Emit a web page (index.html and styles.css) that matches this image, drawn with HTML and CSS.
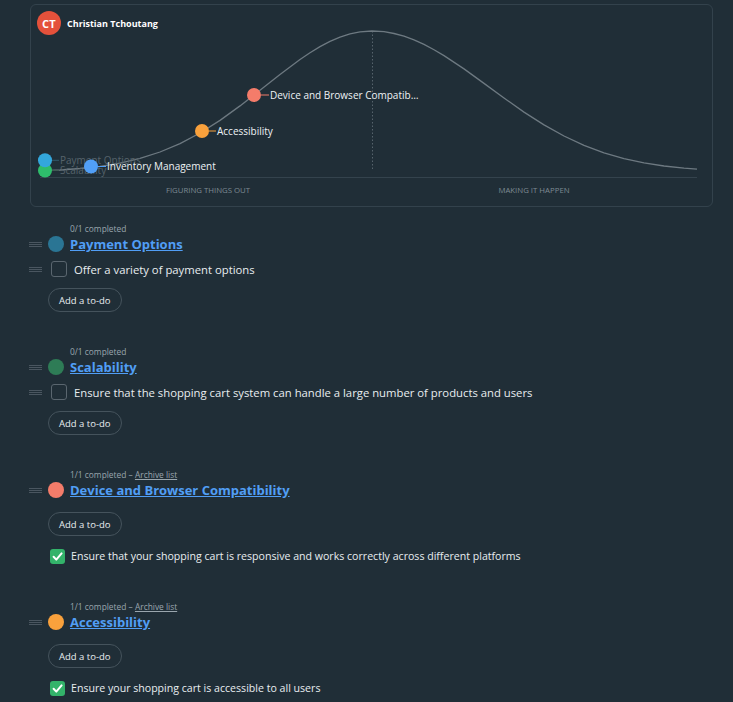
FILE: index.html
```html
<!DOCTYPE html>
<html lang="en">
<head>
<meta charset="utf-8">
<title>Hill chart</title>
<link rel="stylesheet" href="styles.css">
</head>
<body>
<div class="page">
  <section class="chart-card">
    <div class="owner">
      <span class="avatar">CT</span>
      <span class="owner-name">Christian Tchoutang</span>
    </div>
    <svg class="hill" width="681" height="201" viewBox="31 5 681 201" xmlns="http://www.w3.org/2000/svg">
      <line x1="40" y1="177.5" x2="697" y2="177.5" stroke="#34434d" stroke-width="1"/>
      <line x1="372.5" y1="31" x2="372.5" y2="171" stroke="#56636c" stroke-width="1" stroke-dasharray="1.5 2"/>
      <polyline fill="none" stroke="#6d7981" stroke-width="1.3" stroke-linejoin="round"
        points="40,170.8 60,170 80,168.5 100,166.3 120,163.1 140,158.4 160,152 180,143.6 200,133 220,120.4 240,105.9 260,90.3 280,74.4 300,59.5 310,52.7 320,46.6 330,41.4 340,37.1 350,33.9 360,31.9 372,31 384,31.7 394,33.5 404,36.2 414,39.9 424,44.4 434,49.7 444,55.6 464,68.9 484,83.4 504,98 524,112.1 544,124.9 564,136 584,145.3 604,152.8 624,158.6 644,162.9 664,166 684,168.2 697,169.2"/>
      <text class="axis" x="208" y="192.8" text-anchor="middle">FIGURING THINGS OUT</text>
      <text class="axis" x="534" y="192.8" text-anchor="middle">MAKING IT HAPPEN</text>

      <circle cx="45" cy="170.5" r="7" fill="#2ebd6b"/>
      <line x1="52" y1="170.5" x2="59" y2="170.5" stroke="#3f5a52" stroke-width="1"/>
      <text class="pt-label faded" x="60" y="174">Scalability</text>

      <circle cx="45" cy="160.3" r="7" fill="#33a7dc"/>
      <line x1="52" y1="160.3" x2="59" y2="160.3" stroke="#33596c" stroke-width="1"/>
      <text class="pt-label faded" x="60" y="163.8">Payment Options</text>

      <circle cx="91" cy="166.5" r="7" fill="#519ff7"/>
      <line x1="98" y1="166.5" x2="106" y2="166.5" stroke="#519ff7" stroke-width="1"/>
      <text class="pt-label" x="107" y="170">Inventory Management</text>

      <circle cx="202" cy="131" r="7" fill="#f9a13c"/>
      <line x1="209" y1="131" x2="216" y2="131" stroke="#f9a13c" stroke-width="1"/>
      <text class="pt-label" x="217" y="134.5">Accessibility</text>

      <circle cx="254" cy="95" r="7" fill="#f47c6a"/>
      <line x1="261" y1="95" x2="269" y2="95" stroke="#f47c6a" stroke-width="1"/>
      <text class="pt-label" x="270" y="98.5">Device and Browser Compatib…</text>
    </svg>
  </section>

  <section class="scope first">
    <div class="meta">0/1 completed</div>
    <div class="scope-title">
      <span class="handle"></span>
      <span class="dot dot-payment"></span>
      <a class="title-link" href="#">Payment Options</a>
    </div>
    <ul class="todos">
      <li class="todo">
        <span class="handle"></span>
        <span class="checkbox"></span>
        <span class="todo-text">Offer a variety of payment options</span>
      </li>
    </ul>
    <button class="add-todo" type="button">Add a to-do</button>
  </section>

  <section class="scope">
    <div class="meta">0/1 completed</div>
    <div class="scope-title">
      <span class="handle"></span>
      <span class="dot dot-scal"></span>
      <a class="title-link" href="#">Scalability</a>
    </div>
    <ul class="todos">
      <li class="todo">
        <span class="handle"></span>
        <span class="checkbox"></span>
        <span class="todo-text">Ensure that the shopping cart system can handle a large number of products and users</span>
      </li>
    </ul>
    <button class="add-todo" type="button">Add a to-do</button>
  </section>

  <section class="scope">
    <div class="meta">1/1 completed – <a class="archive" href="#">Archive list</a></div>
    <div class="scope-title">
      <span class="handle"></span>
      <span class="dot dot-device"></span>
      <a class="title-link" href="#">Device and Browser Compatibility</a>
    </div>
    <ul class="todos"></ul>
    <button class="add-todo" type="button">Add a to-do</button>
    <ul class="done-list">
      <li class="done">
        <span class="checked"><svg width="15" height="15" viewBox="0 0 15 15"><path d="M3.6 7.8 L6.3 10.6 L11.6 4.4" fill="none" stroke="#fff" stroke-width="2" stroke-linecap="round" stroke-linejoin="round"/></svg></span>
        <span class="done-text">Ensure that your shopping cart is responsive and works correctly across different platforms</span>
      </li>
    </ul>
  </section>

  <section class="scope">
    <div class="meta">1/1 completed – <a class="archive" href="#">Archive list</a></div>
    <div class="scope-title">
      <span class="handle"></span>
      <span class="dot dot-access"></span>
      <a class="title-link" href="#">Accessibility</a>
    </div>
    <ul class="todos"></ul>
    <button class="add-todo" type="button">Add a to-do</button>
    <ul class="done-list">
      <li class="done">
        <span class="checked"><svg width="15" height="15" viewBox="0 0 15 15"><path d="M3.6 7.8 L6.3 10.6 L11.6 4.4" fill="none" stroke="#fff" stroke-width="2" stroke-linecap="round" stroke-linejoin="round"/></svg></span>
        <span class="done-text">Ensure your shopping cart is accessible to all users</span>
      </li>
    </ul>
  </section>
</div>
</body>
</html>
```

FILE: styles.css
```css
* { box-sizing: border-box; }

html, body {
  margin: 0;
  padding: 0;
  background: #202e37;
  font-family: "Open Sans", "Noto Sans", sans-serif;
  color: #e8edf0;
}

.page {
  padding: 4px 20px 0 28px;
}

.chart-card {
  position: relative;
  margin-left: 2px;
  height: 203px;
  border: 1px solid #33424c;
  border-radius: 6px;
}

.owner {
  display: flex;
  align-items: center;
  gap: 6px;
  padding: 6px 0 0 6px;
  position: relative;
  z-index: 1;
}

.avatar {
  width: 24px;
  height: 24px;
  border-radius: 50%;
  background: #e4513b;
  color: #fff;
  font-weight: 700;
  font-size: 11px;
  display: flex;
  align-items: center;
  justify-content: center;
  letter-spacing: 0.2px;
}

.owner-name {
  font-weight: 700;
  font-size: 9px;
  color: #fff;
}

.hill {
  position: absolute;
  left: 0;
  top: 0;
  display: block;
}

.axis {
  font-family: "Open Sans", sans-serif;
  font-size: 7.8px;
  fill: #7d8a93;
}

.pt-label {
  font-family: "Open Sans", sans-serif;
  font-size: 10px;
  fill: #eef2f5;
}

.pt-label.faded {
  fill: #56636b;
}

.scope {
  display: flex;
  flex-direction: column;
  align-items: stretch;
  margin-top: 34px;
}

.scope.first {
  margin-top: 16px;
}

.meta {
  padding-left: 42px;
  font-size: 8.4px;
  line-height: 12px;
  color: #9aa6ae;
}

.archive {
  color: #9aa6ae;
  text-decoration: underline;
}

.scope-title {
  display: flex;
  align-items: center;
  height: 18px;
  gap: 6px;
}

.handle {
  display: block;
  width: 13px;
  height: 5px;
  margin-left: 1px;
  background: repeating-linear-gradient(to bottom, #4a5660 0 1px, transparent 1px 2px);
  flex: none;
}

.dot {
  width: 16px;
  height: 16px;
  border-radius: 50%;
  flex: none;
}

.dot-payment { background: #2a7594; }
.dot-scal { background: #2e7c56; }
.dot-device { background: #f47c6a; }
.dot-access { background: #f9a13c; }

.title-link {
  font-size: 13px;
  font-weight: 700;
  color: #519ef5;
  text-decoration: underline;
  line-height: 18px;
}

.todos {
  list-style: none;
  margin: 5px 0 0;
  padding: 0;
}

.todo {
  display: flex;
  align-items: center;
  height: 22px;
}

.todo .checkbox {
  width: 16px;
  height: 16px;
  margin-left: 9px;
  border: 1.5px solid #5a666f;
  border-radius: 3px;
  flex: none;
}

.todo-text {
  margin-left: 7px;
  font-size: 11.3px;
  color: #e8edf0;
}

.add-todo {
  align-self: flex-start;
  margin: 8px 0 0 20px;
  height: 24px;
  padding: 0 10px;
  border: 1px solid #45535c;
  border-radius: 12px;
  background: transparent;
  color: #e8edf0;
  font-family: "Open Sans", sans-serif;
  font-size: 9.5px;
  cursor: pointer;
}

.done-list {
  list-style: none;
  margin: 9px 0 0;
  padding: 0;
}

.done {
  display: flex;
  align-items: center;
  height: 22px;
  padding-left: 22px;
  gap: 6px;
}

.checked {
  width: 15px;
  height: 15px;
  border-radius: 3px;
  background: #33b36a;
  flex: none;
  display: block;
}

.checked svg {
  display: block;
}

.done-text {
  font-size: 10.6px;
  color: #e8edf0;
}
```
